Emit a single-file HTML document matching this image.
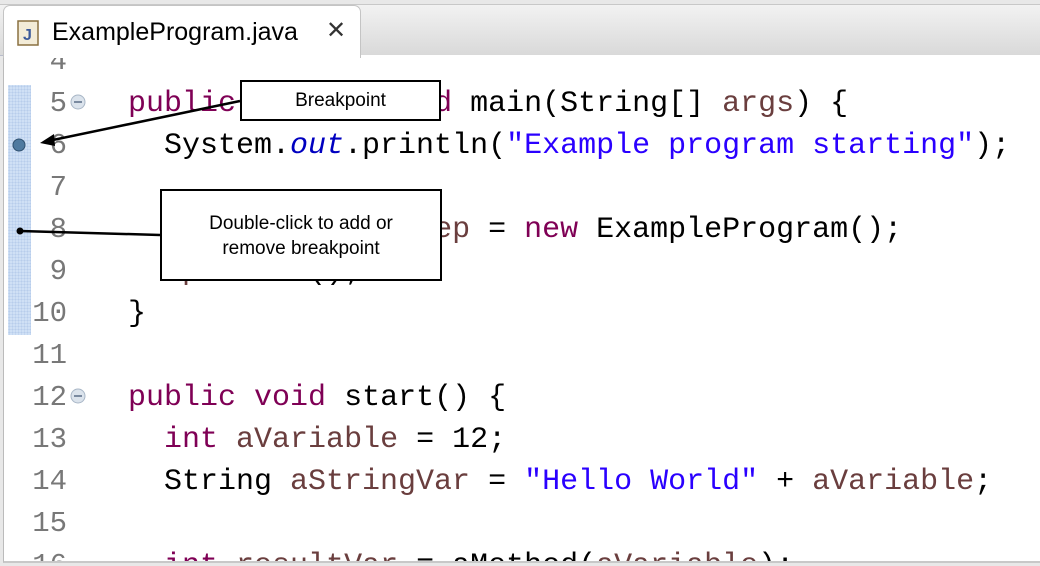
<!DOCTYPE html>
<html><head><style>
body{margin:0;width:1040px;height:566px;overflow:hidden;background:#e8e8e8;position:relative;font-family:"Liberation Sans",sans-serif}
.bar{position:absolute;left:0;top:4px;width:1040px;height:50px;background:linear-gradient(#f2f2f2,#d9d9d9);border-top:1px solid #c8c8c8;border-bottom:1px solid #b8bccb}
.tab{position:absolute;left:3px;top:5px;width:356px;height:52px;background:#fff;border:1px solid #c4c4c4;border-bottom:none;border-radius:7px 7px 0 0;z-index:2}
.tab .t{position:absolute;left:48px;top:12px;font-size:25px;color:#000}
.tab .x{position:absolute;left:322px;top:10px;font-size:24px;color:#333}
.ed{position:absolute;left:3px;top:55px;width:1040px;height:506px;background:#fff;border-left:1px solid #bbb;border-bottom:2px solid #c8c8c8;overflow:hidden}
.gut{position:absolute;left:4px;top:30px;width:23px;height:250px;background:#cfe0f5;background-image:radial-gradient(#b7cdeb 1px,transparent 1px);background-size:3px 3px}
.ln{position:absolute;left:0;width:63px;text-align:right;font-family:"Liberation Mono",monospace;font-size:29px;color:#787878;line-height:42px}
.code{position:absolute;left:124px;font-family:"Liberation Mono",monospace;font-size:30px;line-height:42px;white-space:pre;color:#000}
.k{color:#7f0055}.v{color:#6a3e3e}.s{color:#2a00ff}.o{color:#0000c0;font-style:italic}
.box{position:absolute;background:#fff;border:2px solid #000;font-size:19px;text-align:center;z-index:5;box-sizing:border-box}
</style></head><body>
<div class="bar"></div>
<div class="tab">
<svg style="position:absolute;left:13px;top:14px" width="22" height="26"><rect x="1" y="1" width="20" height="24" fill="#f3ecd8" stroke="#8a7040" stroke-width="1.5"/><text x="6" y="20" font-family="Liberation Sans" font-weight="bold" font-size="16" fill="#3c5a9a">J</text></svg>
<span class="t">ExampleProgram.java</span><span class="x">✕</span></div>
<div class="ed">
<div class="gut"></div>
<svg style="position:absolute;left:66px;top:39px" width="18" height="18"><circle cx="8" cy="8" r="7" fill="#dbe3ec" stroke="#a8b6c6"/><rect x="4" y="7" width="8" height="2" fill="#7a8aa0"/></svg>
<svg style="position:absolute;left:66px;top:333px" width="18" height="18"><circle cx="8" cy="8" r="7" fill="#dbe3ec" stroke="#a8b6c6"/><rect x="4" y="7" width="8" height="2" fill="#7a8aa0"/></svg>
<div class="ln" style="top:-14px">4<br>5<br>6<br>7<br>8<br>9<br>10<br>11<br>12<br>13<br>14<br>15<br>16</div>
<div class="code" style="top:-14px">
<span class="k">public</span> <span class="k">static</span> <span class="k">void</span> main(String[] <span class="v">args</span>) {
  System.<span class="o">out</span>.println(<span class="s">"Example program starting"</span>);

  ExampleProgram <span class="v">ep</span> = <span class="k">new</span> ExampleProgram();
  <span class="v">ep</span>.start();
}

<span class="k">public</span> <span class="k">void</span> start() {
  <span class="k">int</span> <span class="v">aVariable</span> = 12;
  String <span class="v">aStringVar</span> = <span class="s">"Hello World"</span> + <span class="v">aVariable</span>;

  <span class="k">int</span> <span class="v">resultVar</span> = aMethod(<span class="v">aVariable</span>);</div>
</div>
<svg style="position:absolute;left:0;top:0;z-index:4" width="1040" height="566">
<circle cx="19" cy="145" r="6" fill="#4f7aa0" stroke="#2f5070"/>
<line x1="240" y1="101" x2="48" y2="141" stroke="#000" stroke-width="2.5"/>
<polygon points="40,143 54,134 55,146" fill="#000"/>
<line x1="160" y1="235" x2="20" y2="231" stroke="#000" stroke-width="2.5"/>
<circle cx="20" cy="231" r="3.5" fill="#000"/>
</svg>
<div class="box" style="left:240px;top:80px;width:201px;height:41px;line-height:37px">Breakpoint</div>
<div class="box" style="left:160px;top:189px;width:282px;height:92px;padding-top:20px;line-height:25px">Double-click to add or<br>remove breakpoint</div>
</body></html>
